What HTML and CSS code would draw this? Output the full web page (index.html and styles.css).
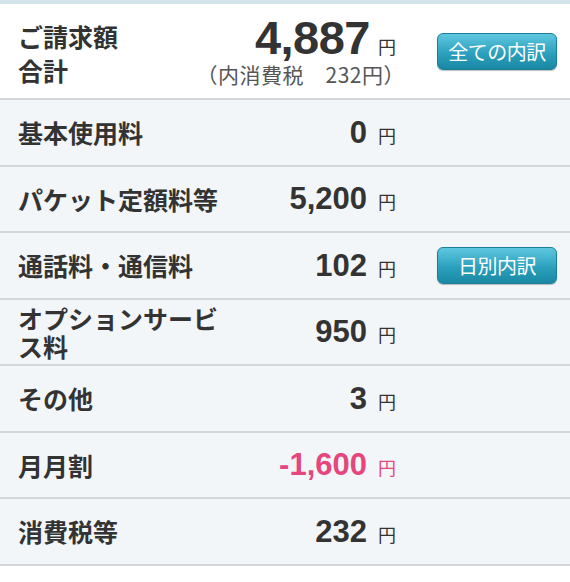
FILE: index.html
```html
<!DOCTYPE html>
<html lang="ja">
<head>
  <meta charset="UTF-8" />
  <meta name="viewport" content="width=device-width, initial-scale=1.0"/>
  <title>ご請求額</title>
  <link rel="stylesheet" href="styles.css">
</head>
<body>

  <div class="top-strip"></div>

  <div class="bill-total">
    <div class="label total-label">ご請求額<br>合計</div>
    <div class="value total-value">
      <div class="amount-line"><span class="num big">4,887</span><span class="yen">円</span></div>
      <div class="tax-note">（内消費税　232円）</div>
    </div>
    <div class="action">
      <a class="btn" href="#">全ての内訳</a>
    </div>
  </div>

  <div class="bill-list">
    <div class="row">
      <div class="label">基本使用料</div>
      <div class="value"><span class="num">0</span><span class="yen">円</span></div>
      <div class="action"></div>
    </div>
    <div class="row">
      <div class="label">パケット定額料等</div>
      <div class="value"><span class="num">5,200</span><span class="yen">円</span></div>
      <div class="action"></div>
    </div>
    <div class="row">
      <div class="label">通話料・通信料</div>
      <div class="value"><span class="num">102</span><span class="yen">円</span></div>
      <div class="action">
        <a class="btn" href="#">日別内訳</a>
      </div>
    </div>
    <div class="row">
      <div class="label">オプションサービス料</div>
      <div class="value"><span class="num">950</span><span class="yen">円</span></div>
      <div class="action"></div>
    </div>
    <div class="row">
      <div class="label">その他</div>
      <div class="value"><span class="num">3</span><span class="yen">円</span></div>
      <div class="action"></div>
    </div>
    <div class="row discount">
      <div class="label">月月割</div>
      <div class="value"><span class="num">-1,600</span><span class="yen">円</span></div>
      <div class="action"></div>
    </div>
    <div class="row">
      <div class="label">消費税等</div>
      <div class="value"><span class="num">232</span><span class="yen">円</span></div>
      <div class="action"></div>
    </div>
  </div>

</body>
</html>
```

FILE: styles.css
```css
body {
  margin: 0;
  background-color: #fff;
  color: #333;
  font-family: "Noto Sans CJK JP", sans-serif;
}

.top-strip {
  height: 4px;
  background-color: #d3e5eb;
}

.bill-total,
.row {
  display: flex;
  align-items: center;
  border-bottom: 2px solid #d3d7da;
}

.bill-total {
  height: 94px;
  background-color: #fff;
}

.bill-list .row {
  height: 64.5px;
  background-color: #f3f6f9;
}

.label {
  width: 205px;
  flex-shrink: 0;
  padding-left: 18px;
  font-size: 25px;
  font-weight: 700;
  line-height: 28px;
  color: #333;
}

.total-label {
  line-height: 34px;
  margin-top: 4px;
}

.value {
  display: flex;
  align-items: baseline;
  justify-content: flex-end;
  width: 173px;
  flex-shrink: 0;
  white-space: nowrap;
}

.num {
  font-family: "Liberation Sans", "Noto Sans CJK JP", sans-serif;
  font-weight: 700;
  font-size: 31px;
  line-height: 1;
  color: #333;
}

.num.big {
  font-size: 47px;
  letter-spacing: -0.5px;
}

.yen {
  margin-left: 11px;
  font-size: 18px;
  line-height: 1;
  color: #333;
}

.discount .num,
.discount .yen {
  color: #e5467e;
}

/* total block: amount on top, tax note below */
.total-value {
  display: block;
  margin-top: -2px;
}

.amount-line {
  display: flex;
  align-items: baseline;
  justify-content: flex-end;
}

.amount-line .yen {
  margin-left: 8px;
}

.tax-note {
  margin-top: 1px;
  margin-left: -60px;
  margin-right: -9px;
  text-align: right;
  font-size: 21px;
  line-height: 24px;
  letter-spacing: 0.5px;
  color: #555;
}

.action {
  flex: 1;
  padding-left: 41px;
}

.btn {
  display: block;
  box-sizing: border-box;
  width: 120px;
  height: 37px;
  line-height: 35px;
  text-align: center;
  border: 1px solid #1b7f99;
  border-radius: 6px;
  background: linear-gradient(#5fc7df, #2ba0bd 55%, #1a88a4);
  box-shadow: 0 1px 1px rgba(0, 0, 0, 0.25);
  color: #fff;
  font-size: 20px;
  letter-spacing: -0.5px;
  text-decoration: none;
}
```
